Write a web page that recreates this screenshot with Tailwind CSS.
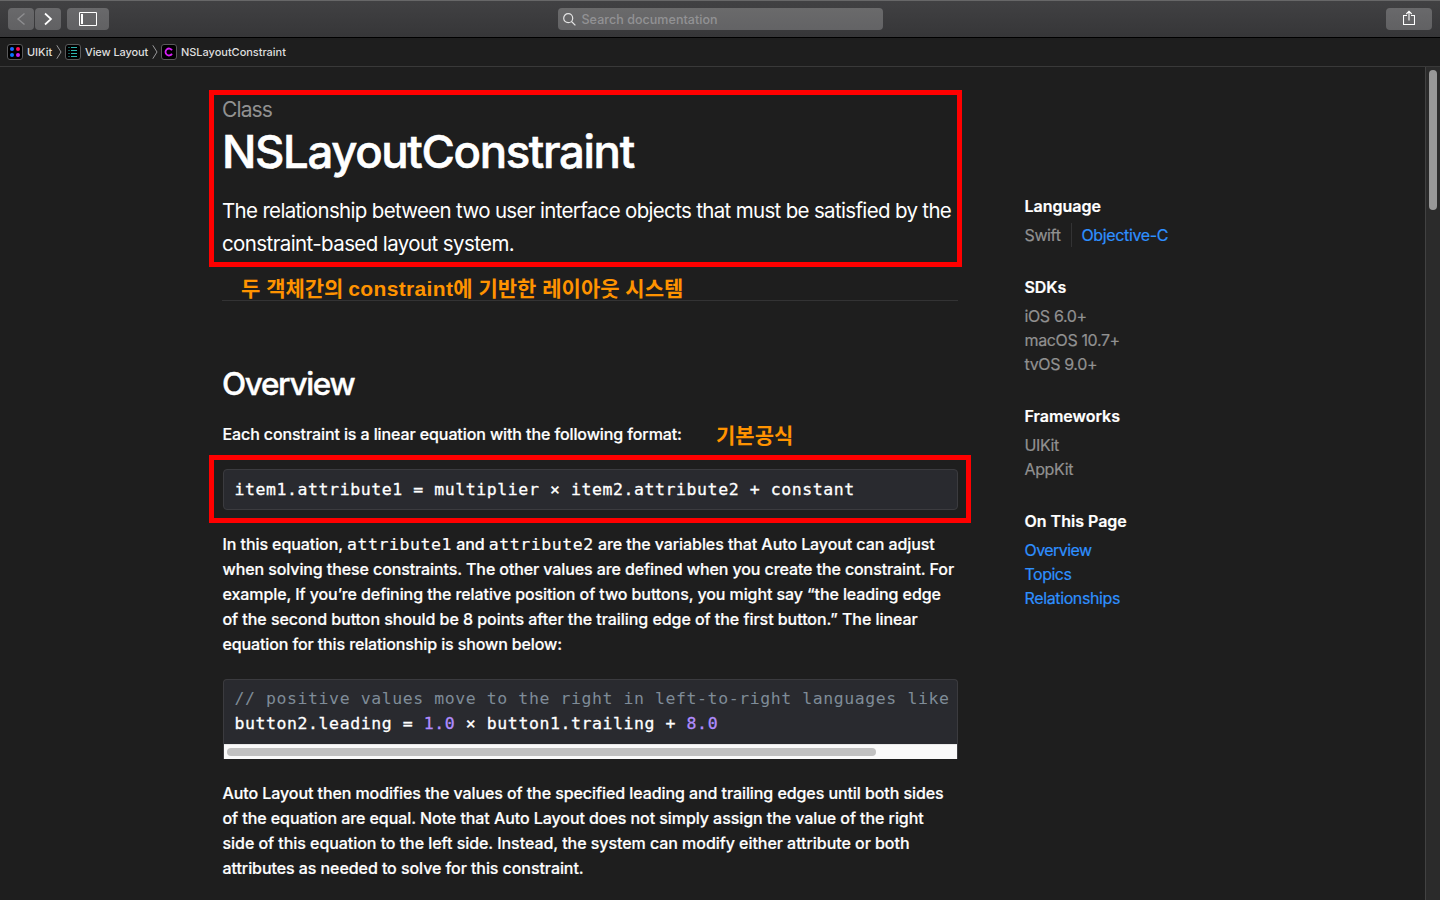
<!DOCTYPE html>
<html lang="en">
<head>
<meta charset="utf-8">
<title>NSLayoutConstraint</title>
<script src="https://cdn.jsdelivr.net/npm/@tailwindcss/browser@4"></script>
</head>
<body class="flex h-[900px] flex-col overflow-hidden bg-[#1e1e1e] font-['Inter','Noto_Sans_CJK_KR',sans-serif] text-white">
  <!-- Toolbar -->
  <header class="grid h-[38px] shrink-0 grid-cols-[1fr_325px_1fr] items-center border-t border-b border-t-[#676768] border-b-black bg-linear-to-b from-[#414143] to-[#363638] px-2">
    <div class="flex items-center gap-px">
      <button class="flex h-[22px] w-[26px] items-center justify-center rounded bg-linear-to-b from-[#69696b] to-[#616163]">
        <svg class="h-[14px] w-[10px]" viewBox="0 0 10 14" fill="none" stroke="#8e8e90" stroke-width="1.4"><path d="M8.5 1.5 2 7l6.5 5.5"/></svg>
      </button>
      <button class="flex h-[22px] w-[26px] items-center justify-center rounded bg-linear-to-b from-[#69696b] to-[#616163]">
        <svg class="h-[14px] w-[10px]" viewBox="0 0 10 14" fill="none" stroke="#fff" stroke-width="1.7"><path d="M2 1.5 8 7l-6 5.5"/></svg>
      </button>
      <button class="ml-[5px] flex h-[22px] w-[42px] items-center justify-center rounded bg-linear-to-b from-[#69696b] to-[#616163]">
        <svg class="h-[14px] w-[18px]" viewBox="0 0 18 14" fill="none"><path d="M.5.5h17v13H.5z" stroke="#fff"/><path d="M2 2h2v10H2z" fill="#fff"/></svg>
      </button>
    </div>
    <div class="flex h-[22px] items-center gap-[6px] rounded bg-linear-to-b from-[#6a6a6b] to-[#636365] pl-[5px]">
      <svg class="h-[13px] w-[13px]" viewBox="0 0 13 13" fill="none" stroke="#e4e4e4" stroke-width="1.2"><circle cx="5.2" cy="5.2" r="4.5"/><path d="m8.5 8.5 3.9 3.9"/></svg>
      <span class="pt-px text-[12.5px] leading-4 font-medium tracking-[0.05px] text-[#929294]">Search documentation</span>
    </div>
    <div class="flex justify-end">
      <button class="flex h-[22px] w-[46px] items-center justify-center rounded bg-linear-to-b from-[#69696b] to-[#616163]">
        <svg class="-mt-[2px] mr-px h-[16px] w-[12px]" viewBox="0 0 12 16" fill="none" stroke="#fff"><path d="M4 5.5H.5v9h11v-9H8M6 10.5V1.5M3.3 4 6 1.3 8.7 4" stroke-width="1.1"/></svg>
      </button>
    </div>
  </header>

  <!-- Breadcrumb -->
  <nav class="flex h-[29px] shrink-0 items-center border-b border-[#393939] pl-[7px] text-[11px] leading-4 font-medium whitespace-nowrap text-[#dedede]">
    <svg class="h-4 w-4" viewBox="0 0 16 16"><rect x=".5" y=".5" width="15" height="15" rx="2.5" fill="#000" stroke="#59595a"/><circle cx="5" cy="5" r="2" fill="#1d6bff"/><circle cx="11" cy="5" r="2" fill="#ff0a54"/><circle cx="5" cy="11" r="2" fill="#0a74ff"/><circle cx="11" cy="11" r="2" fill="#c81df0"/></svg>
    <span class="ml-1 w-[26px] tracking-[-0.05px]">UIKit</span>
    <svg class="ml-[3px] h-[14px] w-[6px]" viewBox="0 0 6 14" fill="none" stroke="#98989a"><path d="M.8.3 5 7 .8 13.7"/></svg>
    <svg class="ml-[3px] h-4 w-4" viewBox="0 0 16 16"><rect x=".5" y=".5" width="15" height="15" rx="2.5" fill="#000" stroke="#59595a"/><path d="M6 3.5h6M6 6.5h6M6 9.5h6M6 12.5h6" stroke="#2fb5b0"/><path d="M3.5 3.5h1M3.5 6.5h1M3.5 9.5h1M3.5 12.5h1" stroke="#2fb5b0"/></svg>
    <span class="ml-1 w-[63px] tracking-[-0.1px]">View Layout</span>
    <svg class="ml-[4px] h-[14px] w-[6px]" viewBox="0 0 6 14" fill="none" stroke="#98989a"><path d="M.8.3 5 7 .8 13.7"/></svg>
    <svg class="ml-[3px] h-4 w-4" viewBox="0 0 16 16"><rect x=".5" y=".5" width="15" height="15" rx="2.5" fill="#000" stroke="#59595a"/><path d="M11 6.2A3.5 3.5 0 1 0 11 9.8" fill="none" stroke="#d41ff5" stroke-width="1.8"/></svg>
    <span class="ml-1 tracking-[-0.03px]">NSLayoutConstraint</span>
  </nav>

  <div class="flex min-h-0 flex-1">
    <main class="relative flex min-w-0 flex-1 items-start overflow-hidden pl-[222px] whitespace-nowrap">
      <article class="w-[736px] pt-[31px]">
        <p class="h-6 text-[21px] leading-6 tracking-[-0.88px] text-[#919191]">Class</p>
        <h1 class="mt-1 h-[52px] text-[45.5px] leading-[52px] font-medium tracking-[-1.35px] [-webkit-text-stroke:0.6px]">NSLayoutConstraint</h1>
        <p class="mt-4 text-[20.5px] leading-[33px] tracking-[-0.67px]">The relationship between two user interface objects that must be satisfied by the<br><span class="tracking-[-0.6px]">constraint-based layout system.</span></p>
        <hr class="mt-10 border-[#333334]">
        <h2 class="mt-16 h-[38px] text-[31.5px] leading-[38px] font-medium tracking-[-1.35px] [-webkit-text-stroke:0.4px]">Overview</h2>
        <p class="mt-[19px] pl-[0.5px] text-[16px] leading-[25px] font-medium tracking-[-0.1px] [-webkit-text-stroke:0.2px]">Each constraint is a linear equation with the following format:</p>
        <pre class="mt-[22px] ml-px h-[41px] rounded border border-[#3b3b3f] bg-[#292a2f] px-[10.5px] pt-[7px] font-['DejaVu_Sans_Mono',monospace] text-[16.5px] leading-[25px] tracking-[0.58px] [-webkit-text-stroke:0.3px]">item1.attribute1 = multiplier × item2.attribute2 + constant</pre>
        <p class="mt-[22px] pl-[0.5px] text-[16px] leading-[25px] font-medium tracking-[-0.09px] [-webkit-text-stroke:0.2px]"><span class="tracking-[-0.08px]">In this equation, <code class="font-['DejaVu_Sans_Mono',monospace] text-[16.5px] leading-none font-normal tracking-[0.57px]">attribute1</code> and <code class="font-['DejaVu_Sans_Mono',monospace] text-[16.5px] leading-none font-normal tracking-[0.57px]">attribute2</code> are the variables that Auto Layout can adjust</span><br><span class="tracking-[-0.1px]">when solving these constraints. The other values are defined when you create the constraint. For</span><br>example, If you’re defining the relative position of two buttons, you might say “the leading edge<br><span class="tracking-[-0.05px]">of the second button should be 8 points after the trailing edge of the first button.” The linear</span><br><span class="tracking-[-0.12px]">equation for this relationship is shown below:</span></p>
        <div class="mt-[22px] ml-px h-20 overflow-hidden rounded-t border border-b-0 border-[#3b3b3f] bg-[#292a2f]">
          <pre class="h-16 overflow-hidden px-[10.5px] pt-[6px] font-['DejaVu_Sans_Mono',monospace] text-[16.5px] leading-[25px] tracking-[0.58px] [-webkit-text-stroke:0.3px]"><span class="text-[#7f8c98] [-webkit-text-stroke:0px]">// positive values move to the right in left‑to‑right languages like</span>
button2.leading = <span class="text-[#b18cfe]">1.0</span> × button1.trailing + <span class="text-[#b18cfe]">8.0</span></pre>
          <div class="flex h-[15px] items-center border-t border-[#e8e8e8] bg-[#fafafa] pl-[3px]">
            <div class="h-2 w-[649px] rounded-full bg-[#c1c1c1]"></div>
          </div>
        </div>
        <p class="mt-[22px] pl-[0.5px] text-[16px] leading-[25px] font-medium tracking-[-0.08px] [-webkit-text-stroke:0.2px]">Auto Layout then modifies the values of the specified leading and trailing edges until both sides<br><span class="tracking-[-0.07px]">of the equation are equal. Note that Auto Layout does not simply assign the value of the right</span><br><span class="tracking-[-0.05px]">side of this equation to the left side. Instead, the system can modify either attribute or both</span><br><span class="tracking-[-0.07px]">attributes as needed to solve for this constraint.</span></p>
      </article>

      <aside class="ml-[66.5px] flex flex-col gap-7 pt-[127px] text-[16px] leading-6 tracking-[-0.37px] text-[#919191] [-webkit-text-stroke:0.2px]">
        <section>
          <h3 class="mb-[5px] font-semibold tracking-[0px] text-white">Language</h3>
          <div class="flex"><span class="w-[47px] border-r border-[#333334]">Swift</span><a class="pl-[10px] text-[#2e90ff]">Objective-C</a></div>
        </section>
        <section>
          <h3 class="mb-[5px] font-semibold tracking-[-0.1px] text-white">SDKs</h3>
          <p>iOS 6.0+</p><p>macOS 10.7+</p><p>tvOS 9.0+</p>
        </section>
        <section>
          <h3 class="mb-[5px] font-semibold tracking-[0px] text-white">Frameworks</h3>
          <p>UIKit</p><p>AppKit</p>
        </section>
        <section>
          <h3 class="mb-[5px] font-semibold tracking-[0px] text-white">On This Page</h3>
          <div class="flex flex-col text-[#2e90ff]"><a class="tracking-[-0.55px]">Overview</a><a class="tracking-[-0.5px]">Topics</a><a>Relationships</a></div>
        </section>
      </aside>

      <!-- Markup drawn over the page -->
      <div class="absolute top-[23px] left-[209px] h-[177px] w-[753px] border-5 border-[#ff0000]"></div>
      <div class="absolute top-[388px] left-[209px] h-[68px] w-[762px] border-5 border-[#ff0000]"></div>
      <p class="absolute top-[207px] left-[241px] font-['Liberation_Sans','Noto_Sans_CJK_KR',sans-serif] text-[21px] leading-[30px] font-bold text-[#ff9300]">두 객체간의 <span class="-ml-px tracking-[0.35px]">constraint</span>에 기반한 레이아웃 시스템</p>
      <p class="absolute top-[354px] left-[716px] font-['Liberation_Sans','Noto_Sans_CJK_KR',sans-serif] text-[21px] leading-[30px] font-bold text-[#ff9300]">기본공식</p>
    </main>

    <!-- Window scrollbar -->
    <div class="w-[15px] shrink-0 border-l border-[#424242] bg-[#2b2b2b] pt-[3px] pl-[3px]">
      <div class="h-[140px] w-2 rounded-full bg-[#989898]"></div>
    </div>
  </div>
</body>
</html>
